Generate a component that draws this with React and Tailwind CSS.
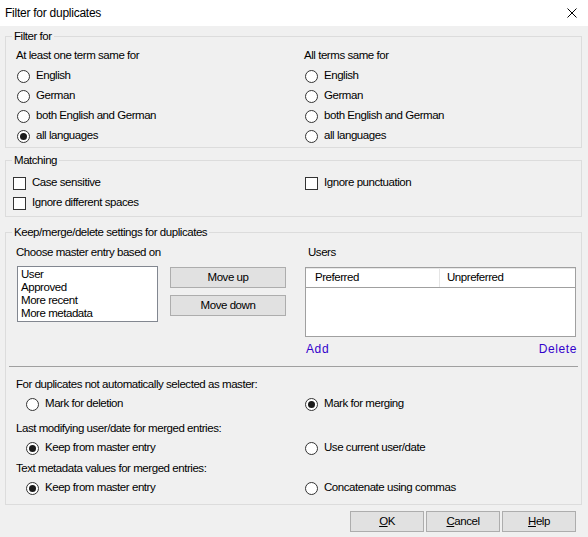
import React from "react";

const Radio = ({ checked }) => (
  <span className="w-[13px] h-[13px] rounded-full border border-[#333333] bg-white flex items-center justify-center shrink-0">
    {checked && <span className="w-[7px] h-[7px] rounded-full bg-[#1a1a1a]" />}
  </span>
);

const Check = () => (
  <span className="w-[13px] h-[13px] border border-[#333333] bg-white shrink-0" />
);

const RadioRow = ({ label, checked, className = "" }) => (
  <div className={"h-[20px] flex items-center gap-[6px] " + className}>
    <Radio checked={checked} />
    <span>{label}</span>
  </div>
);

const CheckRow = ({ label }) => (
  <div className="h-[20px] flex items-center gap-[6px]">
    <Check />
    <span>{label}</span>
  </div>
);

const Legend = ({ children }) => (
  <span className="block w-fit -mt-[8px] ml-[6px] px-[2px] leading-[14px] bg-[#f0f0f0]">
    {children}
  </span>
);

const Btn = ({ children, className = "" }) => (
  <button
    type="button"
    className={"h-[21px] bg-[#e1e1e1] border border-[#adadad] text-black leading-none " + className}
  >
    {children}
  </button>
);

const langs = ["English", "German", "both English and German", "all languages"];

export default function App() {
  return (
    <div className="w-[588px] h-[537px] bg-[#f0f0f0] overflow-hidden text-[11.5px] tracking-[-0.45px] text-black font-['Liberation_Sans',Arial,sans-serif]">
      {/* title bar */}
      <div className="h-[26px] bg-white flex items-center justify-between pl-[5px] pr-[11px]">
        <span className="text-[12px] tracking-[-0.25px]">Filter for duplicates</span>
        <svg width="10" height="10" viewBox="0 0 10 10" className="shrink-0">
          <path d="M0.5 0.5 L9.5 9.5 M9.5 0.5 L0.5 9.5" stroke="#000" strokeWidth="1" />
        </svg>
      </div>

      <div className="px-[5px]">
        {/* Filter for */}
        <div className="mt-[10px] w-[577px] border border-[#dcdcdc] pb-[1px]">
          <Legend>Filter for</Legend>
          <div className="pt-[3px] pl-[10px] grid grid-cols-[288px_1fr]">
            <div>
              <div className="h-[20px] flex items-center">At least one term same for</div>
              {langs.map((l, i) => (
                <RadioRow key={l} label={l} checked={i === 3} className="pl-[1px]" />
              ))}
            </div>
            <div>
              <div className="h-[20px] flex items-center">All terms same for</div>
              {langs.map((l) => (
                <RadioRow key={l} label={l} className="pl-[1px]" />
              ))}
            </div>
          </div>
        </div>

        {/* Matching */}
        <div className="mt-[12px] w-[577px] border border-[#dcdcdc] pb-[3px]">
          <Legend>Matching</Legend>
          <div className="pt-[6px] pl-[7px] grid grid-cols-[292px_1fr]">
            <div>
              <CheckRow label="Case sensitive" />
              <CheckRow label="Ignore different spaces" />
            </div>
            <div>
              <CheckRow label="Ignore punctuation" />
            </div>
          </div>
        </div>

        {/* Keep/merge/delete */}
        <div className="mt-[15px] w-[577px] border border-[#dcdcdc] pb-[6px]">
          <Legend>Keep/merge/delete settings for duplicates</Legend>
          <div className="px-[3px]">
            <div className="pt-[4px] pl-[7px] grid grid-cols-[288px_1fr]">
              <div>
                <div className="h-[20px] flex items-center">Choose master entry based on</div>
                <div className="flex mt-[3px]">
                  <div className="ml-[1px] w-[141px] h-[56px] border border-[#828790] bg-white pl-[3px] pt-[1px] leading-[13px]">
                    <div>User</div>
                    <div>Approved</div>
                    <div>More recent</div>
                    <div>More metadata</div>
                  </div>
                  <div className="ml-[12px] mt-[1px] flex flex-col gap-[7px]">
                    <Btn className="w-[116px]">Move up</Btn>
                    <Btn className="w-[116px]">Move down</Btn>
                  </div>
                </div>
              </div>
              <div>
                <div className="h-[20px] flex items-center pl-[4px]">Users</div>
                <div className="mt-[4px] ml-[1px] w-[271px] h-[70px] border border-[#a0a0a0] bg-white">
                  <div className="h-[20px] flex border-b border-[#a0a0a0] border-t border-t-[#e8e8e8]">
                    <div className="w-[134px] pl-[9px] flex items-center border-r border-[#e5e5e5]">Preferred</div>
                    <div className="pl-[7px] flex items-center">Unpreferred</div>
                  </div>
                </div>
                <div className="mt-[2px] h-[20px] flex items-center justify-between pl-[2px] pr-[1px] text-[12px] text-[#3300cc] tracking-[0.6px]">
                  <span>Add</span>
                  <span>Delete</span>
                </div>
              </div>
            </div>

            <div className="mt-[7px] h-px bg-[#a0a0a0]" />

            <div className="pt-[8px] pl-[7px]">
              <div className="h-[19px] flex items-center">For duplicates not automatically selected as master:</div>
              <div className="grid grid-cols-[289px_1fr]">
                <RadioRow label="Mark for deletion" className="pl-[10px]" />
                <RadioRow label="Mark for merging" checked />
              </div>
              <div className="mt-[5px] h-[19px] flex items-center">Last modifying user/date for merged entries:</div>
              <div className="grid grid-cols-[289px_1fr]">
                <RadioRow label="Keep from master entry" checked className="pl-[10px]" />
                <RadioRow label="Use current user/date" />
              </div>
              <div className="mt-[1px] h-[19px] flex items-center">Text metadata values for merged entries:</div>
              <div className="grid grid-cols-[289px_1fr]">
                <RadioRow label="Keep from master entry" checked className="pl-[10px]" />
                <RadioRow label="Concatenate using commas" />
              </div>
            </div>
          </div>
        </div>
      </div>

      {/* dialog buttons */}
      <div className="mt-[6px] flex justify-end gap-[2px] pr-[12px]">
        <Btn className="w-[74px]"><span className="underline">O</span>K</Btn>
        <Btn className="w-[74px]"><span className="underline">C</span>ancel</Btn>
        <Btn className="w-[74px]"><span className="underline">H</span>elp</Btn>
      </div>
    </div>
  );
}
